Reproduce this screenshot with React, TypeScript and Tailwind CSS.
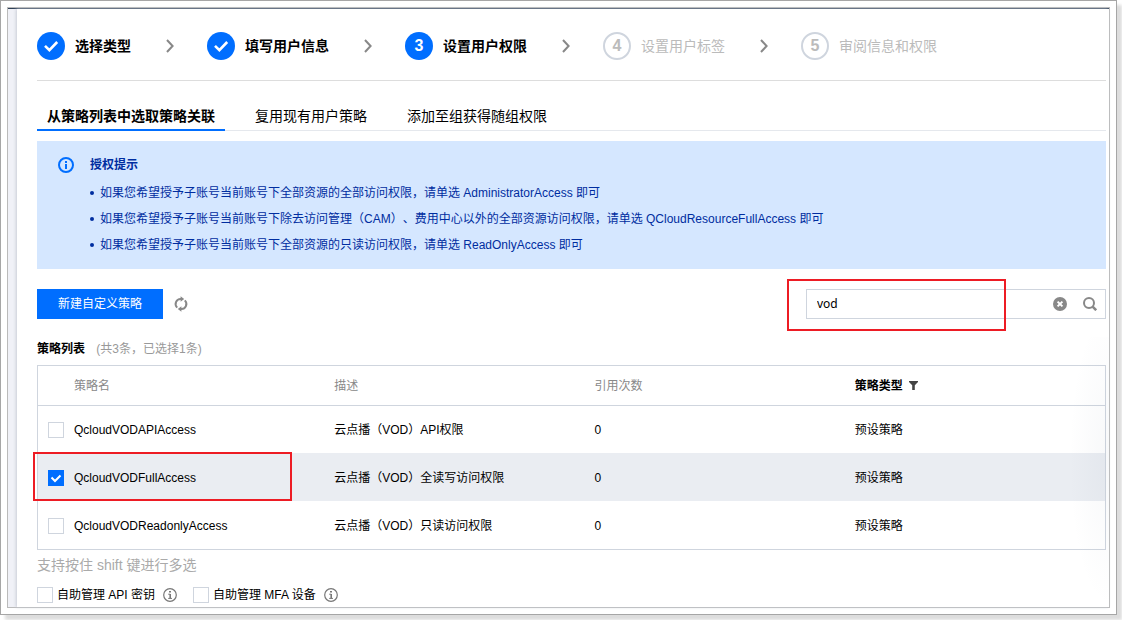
import React, { useState } from "react";
import clsx from "clsx";

type Policy = { name: string; description: string; refs: number; type: string };

const STEPS = ["选择类型", "填写用户信息", "设置用户权限", "设置用户标签", "审阅信息和权限"];
const CURRENT_STEP = 2;

const TABS = ["从策略列表中选取策略关联", "复用现有用户策略", "添加至组获得随组权限"];

const TIPS = [
  "如果您希望授予子账号当前账号下全部资源的全部访问权限，请单选 AdministratorAccess 即可",
  "如果您希望授予子账号当前账号下除去访问管理（CAM）、费用中心以外的全部资源访问权限，请单选 QCloudResourceFullAccess 即可",
  "如果您希望授予子账号当前账号下全部资源的只读访问权限，请单选 ReadOnlyAccess 即可",
];

const POLICIES: Policy[] = [
  { name: "QcloudVODAPIAccess", description: "云点播（VOD）API权限", refs: 0, type: "预设策略" },
  { name: "QcloudVODFullAccess", description: "云点播（VOD）全读写访问权限", refs: 0, type: "预设策略" },
  { name: "QcloudVODReadonlyAccess", description: "云点播（VOD）只读访问权限", refs: 0, type: "预设策略" },
];

const HelpIcon = () => (
  <svg viewBox="0 0 14 14" className="ml-1 size-3.5 text-[#777]" fill="none" stroke="currentColor" aria-hidden="true">
    <circle cx="7" cy="7" r="6.3" strokeWidth="1.2" />
    <path d="M6 3.7h2" strokeWidth="1.6" />
    <path d="M7.2 6v4.5" strokeWidth="1.6" />
    <path d="M5.2 6.2h2M5.2 10.4h3.8" strokeWidth="1" />
  </svg>
);

const Checkbox = ({ id, checked, onChange }: { id: string; checked: boolean; onChange: () => void }) => (
  <span className="relative block size-4 shrink-0">
    <input
      id={id}
      type="checkbox"
      checked={checked}
      onChange={onChange}
      className="block size-4 appearance-none border border-[#cfd5de] bg-white checked:border-[#006eff] checked:bg-[#006eff]"
    />
    {checked && (
      <svg viewBox="0 0 16 16" className="pointer-events-none absolute inset-0 size-4" fill="none" stroke="#fff" strokeWidth="2" aria-hidden="true">
        <path d="M3.5 7.5 7 11l5.5-5.5" />
      </svg>
    )}
  </span>
);

const StepBadge = ({ index }: { index: number }) => {
  if (index < CURRENT_STEP) {
    return (
      <span className="flex size-7 items-center justify-center rounded-full bg-[#006eff]">
        <svg viewBox="0 0 28 28" className="size-7" fill="none" stroke="#fff" strokeWidth="2.6" aria-hidden="true">
          <path d="m8 13.8 4.4 4.4L20.2 10" />
        </svg>
      </span>
    );
  }
  return (
    <span
      className={clsx(
        "flex size-7 items-center justify-center rounded-full text-base font-bold",
        index === CURRENT_STEP ? "bg-[#006eff] text-white" : "border-2 border-[#cfd5de] text-[#bbb]"
      )}
    >
      {index + 1}
    </span>
  );
};

const Steps = () => (
  <ol className="flex items-center border-b border-[#ddd] pt-[23px] pb-5">
    {STEPS.map((step, i) => (
      <li key={step} className="flex items-center">
        <StepBadge index={i} />
        <span className={clsx("ml-2.5 text-sm whitespace-nowrap", i <= CURRENT_STEP ? "font-bold text-black" : "text-[#bbb]")}>{step}</span>
        {i < STEPS.length - 1 && (
          <svg viewBox="0 0 8 14" className="mr-[33px] ml-[35px] h-3.5 w-2" fill="none" stroke="#888" strokeWidth="2" aria-hidden="true">
            <path d="m1 1 5.6 6L1 13" />
          </svg>
        )}
      </li>
    ))}
  </ol>
);

export default function App() {
  const [tab, setTab] = useState(0);
  const [keyword, setKeyword] = useState("vod");
  const [selected, setSelected] = useState<string[]>(["QcloudVODFullAccess"]);
  const [manageApi, setManageApi] = useState(false);
  const [manageMfa, setManageMfa] = useState(false);

  const toggle = (name: string) => {
    setSelected((prev) => (prev.includes(name) ? prev.filter((n) => n !== name) : [...prev, name]));
  };

  return (
    <div className="bg-white pr-[5px] pb-[5px] font-['Liberation_Sans','Noto_Sans_CJK_SC',sans-serif] text-xs text-black [text-spacing-trim:space-all]">
      <div className="border border-[#a6a6a6] bg-white p-1.5 shadow-[5px_5px_3px_#ddd]">
        <div className="border border-[#bababa]">
          <div className="border-t border-[#2e4057] bg-[#f0f1f7] pl-[9px]">
            <main className="relative bg-white pr-[3px] pb-1 pl-5 shadow-[-1px_0_3px_#c8ccd6]">
              <Steps />

              <div role="tablist" className="mt-5 flex gap-5 border-b border-[#e5e8ed]">
                {TABS.map((name, i) => (
                  <button
                    key={name}
                    role="tab"
                    aria-selected={tab === i}
                    onClick={() => setTab(i)}
                    className={clsx("-mb-px h-[30px] border-b-2 px-2.5 pt-0.5 text-sm", tab === i ? "border-[#006eff] font-bold" : "border-transparent")}
                  >
                    {name}
                  </button>
                ))}
              </div>

              <section className="mt-2.5 flex gap-4 bg-[#d5e7ff] px-[21px] pt-3.5 pb-[11px] text-[#002da0]">
                <svg viewBox="0 0 16 16" className="mt-0.5 size-4 shrink-0" fill="none" stroke="#006eff" strokeWidth="2" aria-hidden="true">
                  <circle cx="8" cy="8" r="7" />
                  <path d="M8 4v2M8 7v5" />
                </svg>
                <div>
                  <h2 className="leading-5 font-bold">授权提示</h2>
                  <ul className="mt-[5px]">
                    {TIPS.map((tip) => (
                      <li key={tip} className="flex items-center gap-1.5 leading-[26px]">
                        <span className="size-1 shrink-0 rounded-full bg-[#002da0]" />
                        {tip}
                      </li>
                    ))}
                  </ul>
                </div>
              </section>

              <div className="mt-5 flex items-center">
                <button className="h-[30px] bg-[#006eff] px-[21px] text-white">新建自定义策略</button>
                <button aria-label="刷新" className="ml-2.5">
                  <svg viewBox="0 0 16 16" className="size-4" fill="none" stroke="#888" strokeWidth="2" aria-hidden="true">
                    <path d="M4.2 11.6A5 5 0 0 1 8 3M11.8 4.4A5 5 0 0 1 8 13" />
                    <path d="M7.6.2v5.6l3.6-2.8zM8.4 10.2v5.6L4.8 13z" fill="#888" stroke="none" />
                  </svg>
                </button>
                <div className="relative ml-auto flex h-[30px] w-[300px] items-center border border-[#cfd5de]">
                  <input
                    aria-label="搜索策略"
                    value={keyword}
                    onChange={(e) => setKeyword(e.target.value)}
                    className="min-w-0 flex-1 px-2.5 font-['Noto_Sans',sans-serif] outline-none"
                  />
                  <button aria-label="清除" onClick={() => setKeyword("")} className="mr-4">
                    <svg viewBox="0 0 14 14" className="size-3.5" aria-hidden="true">
                      <circle cx="7" cy="7" r="7" fill="#888" />
                      <path d="m4.6 4.6 4.8 4.8m0-4.8L4.6 9.4" stroke="#fff" strokeWidth="2" />
                    </svg>
                  </button>
                  <button aria-label="搜索" className="mr-2">
                    <svg viewBox="0 0 14 14" className="size-3.5" fill="none" stroke="#888" strokeWidth="2" aria-hidden="true">
                      <circle cx="6" cy="6" r="5" />
                      <path d="m9.6 9.6 3.6 3.6" strokeWidth="2.6" />
                    </svg>
                  </button>
                  <span className="pointer-events-none absolute -top-[11px] -left-5 h-[52px] w-[219px] border-2 border-[#ed1c24]" />
                </div>
              </div>

              <h3 className="mt-5 leading-5 font-bold">
                策略列表 <span className="ml-2 font-normal text-[#999]">(共3条，已选择{selected.length}条)</span>
              </h3>

              <div className="mt-1.5 border border-[#cfd5de]">
                <table className="w-full table-fixed text-left">
                  <colgroup>
                    <col className="w-[26px]" />
                    <col />
                    <col />
                    <col />
                    <col />
                  </colgroup>
                  <thead>
                    <tr className="h-[39px] border-b border-[#cfd5de] text-[#888]">
                      <td />
                      <th className="pt-0.5 pl-2.5 font-normal">策略名</th>
                      <th className="pt-0.5 pl-2.5 font-normal">描述</th>
                      <th className="pt-0.5 pl-2.5 font-normal">引用次数</th>
                      <th className="pt-0.5 pl-2.5 font-bold text-black">
                        <span className="flex items-center gap-1.5">
                          策略类型
                          <svg viewBox="0 0 9 11" className="h-[11px] w-[9px]" fill="#444" aria-hidden="true">
                            <path d="M0 0h9v1L5.8 4.2V9H3.2V4.2L0 1z" />
                          </svg>
                        </span>
                      </th>
                    </tr>
                  </thead>
                  <tbody>
                    {POLICIES.map((policy) => {
                      const checked = selected.includes(policy.name);
                      return (
                        <tr key={policy.name} className={clsx("h-12", checked && "bg-[#eaedf2]")}>
                          <td className="relative pt-0.5 pl-2.5">
                            <Checkbox id={policy.name} checked={checked} onChange={() => toggle(policy.name)} />
                            {checked && <span className="pointer-events-none absolute -top-px -left-[5px] h-[49px] w-[259px] border-2 border-[#ed1c24]" />}
                          </td>
                          <td className="pt-0.5 pl-2.5">
                            <label htmlFor={policy.name}>{policy.name}</label>
                          </td>
                          <td className="pt-0.5 pl-2.5">{policy.description}</td>
                          <td className="pt-0.5 pl-2.5">{policy.refs}</td>
                          <td className="pt-0.5 pl-2.5">{policy.type}</td>
                        </tr>
                      );
                    })}
                  </tbody>
                </table>
              </div>

              <p className="mt-[5px] text-sm text-[#aaa]">支持按住 shift 键进行多选</p>

              <div className="mt-3 flex items-center gap-4">
                <div className="flex items-center gap-1">
                  <Checkbox id="manage-api" checked={manageApi} onChange={() => setManageApi(!manageApi)} />
                  <label htmlFor="manage-api">自助管理 API 密钥</label>
                  <HelpIcon />
                </div>
                <div className="flex items-center gap-1">
                  <Checkbox id="manage-mfa" checked={manageMfa} onChange={() => setManageMfa(!manageMfa)} />
                  <label htmlFor="manage-mfa">自助管理 MFA 设备</label>
                  <HelpIcon />
                </div>
              </div>

              {/* faint shade along the right edge */}
              <div className="pointer-events-none absolute right-0 bottom-0 h-[270px] w-10 bg-radial-[at_100%_45%] from-slate-500/5 to-transparent to-70%" />
            </main>
          </div>
        </div>
      </div>
    </div>
  );
}
